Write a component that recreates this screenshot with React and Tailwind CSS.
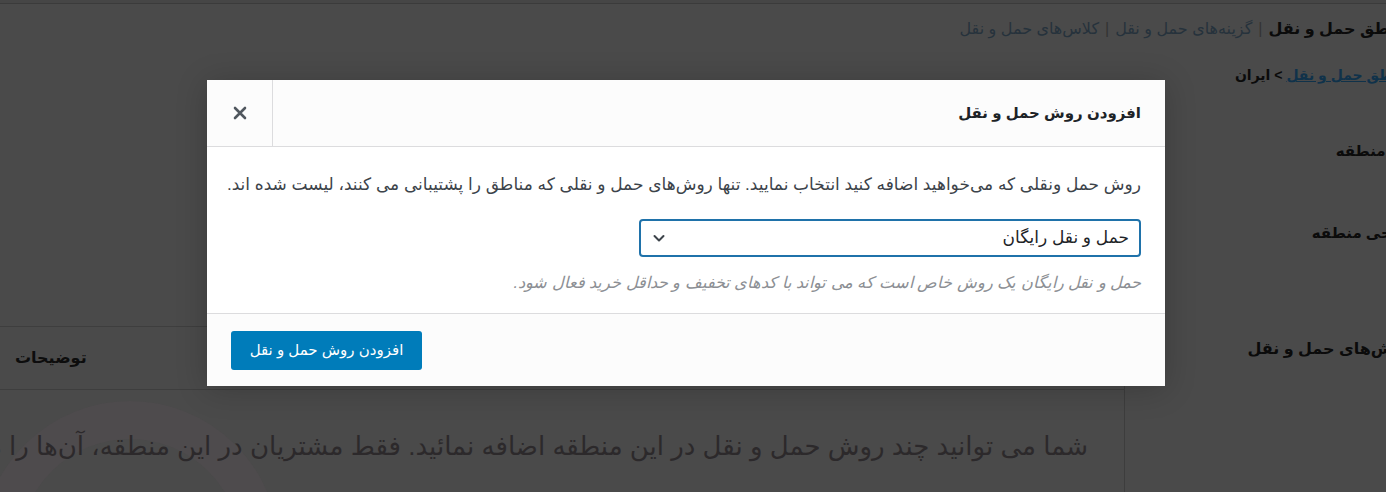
import React from 'react';

const font = { fontFamily: '"Liberation Sans", "DejaVu Sans", sans-serif' };

function ChevronDown() {
  return (
    <svg width="14" height="14" viewBox="0 0 14 14" fill="none">
      <path d="M2.5 5 L7 9.5 L11.5 5" stroke="#3c434a" strokeWidth="2" strokeLinecap="round" strokeLinejoin="round" />
    </svg>
  );
}

function CloseIcon() {
  return (
    <svg width="14" height="14" viewBox="0 0 14 14" fill="none">
      <path d="M2 2 L12 12 M12 2 L2 12" stroke="#50575e" strokeWidth="2.6" strokeLinecap="round" />
    </svg>
  );
}

export default function App() {
  return (
    <div dir="rtl" className="relative w-[1386px] h-[492px] overflow-hidden bg-[#4a4a4a] text-[#0b0b0b]" style={font}>
      {/* dimmed settings page behind the modal */}
      <div className="h-[4px] bg-[#464646] border-b border-[#3b3b3b]" />

      <div className="mr-[-26px]">
        {/* sub navigation */}
        <div className="mt-[15px] h-[20px] leading-[20px] text-[16px] whitespace-nowrap">
          <span className="font-bold text-[#0b0b0b]">مناطق حمل و نقل</span>
          <span className="text-[#333] mx-[6px]">|</span>
          <span className="text-[#26323c]">گزینه‌های حمل و نقل</span>
          <span className="text-[#333] mx-[6px]">|</span>
          <span className="text-[#26323c]">کلاس‌های حمل و نقل</span>
        </div>

        {/* breadcrumb */}
        <div className="mt-[26px] h-[20px] leading-[20px] text-[14px] font-bold whitespace-nowrap">
          <span className="text-[#10324a] underline">مناطق حمل و نقل</span>
          <span className="text-[#0b0b0b]"> &gt; ایران</span>
        </div>

        {/* form rows */}
        <div className="mt-[46px] flex h-[40px] items-center">
          <div className="w-[287px] text-[15px] font-semibold">نام منطقه</div>
        </div>
        <div className="mt-[42px] flex h-[40px] items-center">
          <div className="w-[287px] text-[15px] font-semibold">نواحی منطقه</div>
        </div>
      </div>

      {/* shipping methods row */}
      <div className="mt-[73px] flex items-start mr-[-26px]">
        <div className="w-[287px] shrink-0 pt-[13px] leading-[20px] text-[16px] font-semibold whitespace-nowrap">روش‌های حمل و نقل</div>
        <div className="relative flex-1 border-r border-[#3d3d3d] overflow-hidden">
          <div className="h-[64px] border-y border-[#3e3e3e] flex items-center justify-end pl-[15px]">
            <span className="text-[16px] font-bold text-[#0d0d0d]">توضیحات</span>
          </div>
          <div className="relative h-[120px] pr-[36px] pt-[40px]">
            <svg className="absolute left-[-40px] top-[10px]" width="320" height="260" viewBox="0 0 320 260">
              <circle cx="170" cy="150" r="130" stroke="#6a5560" strokeOpacity="0.12" strokeWidth="38" fill="none" />
            </svg>
            <p className="relative text-[26px] leading-[32px] text-[#2c292b] whitespace-nowrap">
              شما می توانید چند روش حمل و نقل در این منطقه اضافه نمائید. فقط مشتریان در این منطقه، آن‌ها را مشاهده خواهند کرد.
            </p>
          </div>
        </div>
      </div>

      {/* modal */}
      <div className="absolute left-[207px] top-[80px] w-[958px] h-[306px] bg-white flex flex-col shadow-[0_3px_30px_rgba(0,0,0,0.2)]">
        <div className="h-[67px] shrink-0 flex bg-[#fcfcfc] border-b border-[#dcdcde]">
          <h1 className="flex-1 flex items-center pr-[24px] text-[15px] font-bold text-[#1d2327]">افزودن روش حمل و نقل</h1>
          <button className="w-[66px] flex items-center justify-center border-r border-[#dcdcde]">
            <CloseIcon />
          </button>
        </div>

        <div className="flex-1 px-[24px] pt-[28px] bg-white">
          <p className="h-[20px] leading-[20px] text-[17px] text-[#3c434a] whitespace-nowrap">
            روش حمل ونقلی که می‌خواهید اضافه کنید انتخاب نمایید. تنها روش‌های حمل و نقلی که مناطق را پشتیبانی می کنند، لیست شده اند.
          </p>
          <div className="mt-[24px] w-[502px] h-[38px] border-2 border-[#1f72aa] rounded-[4px] flex items-center justify-between pr-[10px] pl-[11px]">
            <span className="text-[17px] text-[#1d2327]">حمل و نقل رایگان</span>
            <ChevronDown />
          </div>
          <p className="mt-[15px] h-[20px] leading-[20px] text-[16.2px] italic text-[#8c8f94] whitespace-nowrap">
            حمل و نقل رایگان یک روش خاص است که می تواند با کدهای تخفیف و حداقل خرید فعال شود.
          </p>
        </div>

        <div className="h-[73px] shrink-0 border-t border-[#dcdcde] bg-[#fcfcfc] flex items-center justify-end pl-[24px]">
          <button className="w-[191px] h-[39px] rounded-[3px] bg-[#007cba] text-white text-[15px]">افزودن روش حمل و نقل</button>
        </div>
      </div>
    </div>
  );
}
